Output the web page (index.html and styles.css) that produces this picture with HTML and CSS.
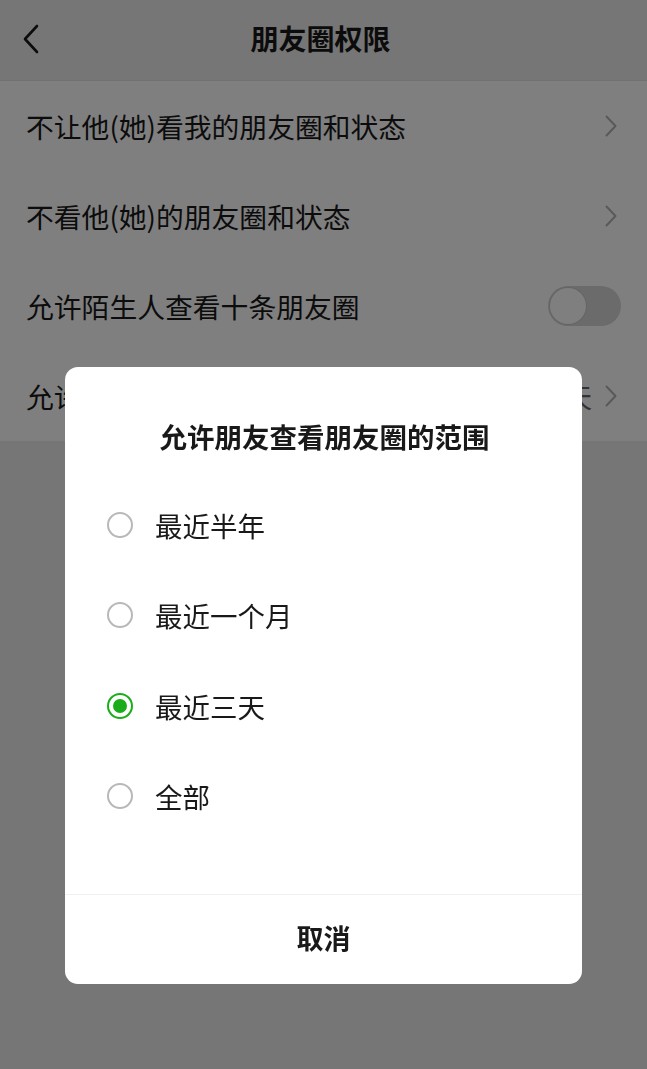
FILE: index.html
```html
<!DOCTYPE html>
<html lang="zh-CN">
<head>
<meta charset="utf-8">
<title>朋友圈权限</title>
<link rel="stylesheet" href="styles.css">
</head>
<body>
<div class="page">
  <header class="navbar">
    <div class="nav-left">
      <svg class="back" width="18" height="30" viewBox="0 0 18 30"><path d="M15 2 L3 15 L15 28" fill="none" stroke="#191919" stroke-width="2.6" stroke-linecap="round" stroke-linejoin="round"/></svg>
    </div>
    <div class="nav-title">朋友圈权限</div>
    <div class="nav-right"></div>
  </header>
  <section class="list">
    <div class="row">
      <span class="label">不让他(她)看我的朋友圈和状态</span>
      <svg class="chev" width="12" height="22" viewBox="0 0 12 22"><path d="M1.5 1.5 L10.5 11 L1.5 20.5" fill="none" stroke="#b2b2b2" stroke-width="2" stroke-linecap="round" stroke-linejoin="round"/></svg>
    </div>
    <div class="row">
      <span class="label">不看他(她)的朋友圈和状态</span>
      <svg class="chev" width="12" height="22" viewBox="0 0 12 22"><path d="M1.5 1.5 L10.5 11 L1.5 20.5" fill="none" stroke="#b2b2b2" stroke-width="2" stroke-linecap="round" stroke-linejoin="round"/></svg>
    </div>
    <div class="row">
      <span class="label">允许陌生人查看十条朋友圈</span>
      <span class="switch"><span class="knob"></span></span>
    </div>
    <div class="row">
      <span class="label">允许朋友查看朋友圈的范围</span>
      <span class="value">最近三天</span>
      <svg class="chev" width="12" height="22" viewBox="0 0 12 22"><path d="M1.5 1.5 L10.5 11 L1.5 20.5" fill="none" stroke="#b2b2b2" stroke-width="2" stroke-linecap="round" stroke-linejoin="round"/></svg>
    </div>
  </section>
</div>

<div class="mask">
  <div class="dialog">
    <div class="dialog-title">允许朋友查看朋友圈的范围</div>
    <ul class="options">
      <li class="option"><span class="radio"></span><span class="opt-text">最近半年</span></li>
      <li class="option"><span class="radio"></span><span class="opt-text">最近一个月</span></li>
      <li class="option"><span class="radio checked"></span><span class="opt-text">最近三天</span></li>
      <li class="option"><span class="radio"></span><span class="opt-text">全部</span></li>
    </ul>
    <div class="dialog-footer">取消</div>
  </div>
</div>
</body>
</html>
```
FILE: styles.css
```css
* { box-sizing: border-box; }
html, body {
  margin: 0;
  padding: 0;
}
body {
  width: 647px;
  height: 1069px;
  background: #ededed;
  font-family: "Noto Sans CJK SC", "Noto Sans", sans-serif;
  color: #191919;
  overflow: hidden;
}
.page {
  height: 1069px;
  background: #ededed;
}
.navbar {
  height: 81px;
  display: grid;
  grid-template-columns: 90px 1fr 90px;
  align-items: center;
  border-bottom: 1px solid #e2e2e2;
}
.nav-left {
  padding-left: 22px;
  display: flex;
  align-items: center;
  padding-bottom: 2px;
}
.nav-title {
  text-align: center;
  font-size: 28px;
  font-weight: 700;
  line-height: 40px;
  padding-right: 6px;
  padding-bottom: 4px;
}
.list {
  background: #ffffff;
}
.row {
  height: 90px;
  display: flex;
  align-items: center;
  padding: 0 30px 0 26px;
}
.label {
  flex: 1;
  font-size: 27.8px;
  line-height: 40px;
  white-space: nowrap;
}
.value {
  font-size: 27.8px;
  color: #666;
  margin-right: 13px;
}
.chev { display: block; }
.switch {
  width: 73px;
  height: 40px;
  border-radius: 20px;
  background: #d6d6d6;
  margin-right: -4px;
  padding: 2px;
  display: flex;
}
.knob {
  width: 36px;
  height: 36px;
  border-radius: 50%;
  background: #ffffff;
  box-shadow: 0 0 0 1px #c8c8c8;
}
.mask {
  position: fixed;
  inset: 0;
  background: rgba(0, 0, 0, 0.5);
  padding-top: 367px;
  display: flex;
  justify-content: center;
  align-items: flex-start;
}
.dialog {
  width: 517px;
  background: #ffffff;
  border-radius: 13px;
  overflow: hidden;
}
.dialog-title {
  padding-top: 49px;
  text-align: center;
  font-size: 27.5px;
  font-weight: 700;
  line-height: 40px;
  padding-left: 2px;
}
.options {
  list-style: none;
  margin: 25px 0 0;
  padding: 0 0 52px;
  border-bottom: 1px solid #f0f0f0;
}
.option {
  height: 90.3px;
  display: flex;
  align-items: center;
  padding-left: 42px;
  gap: 22px;
}
.radio {
  width: 26px;
  height: 26px;
  border-radius: 50%;
  border: 2px solid #b8b8b8;
  flex: none;
  position: relative;
  margin-top: -2px;
}
.radio.checked {
  border-color: #1aad19;
}
.radio.checked::after {
  content: "";
  position: absolute;
  left: 4px;
  top: 4px;
  width: 14px;
  height: 14px;
  border-radius: 50%;
  background: #1aad19;
}
.opt-text {
  font-size: 27.5px;
  line-height: 40px;
  margin-top: -2px;
}
.dialog-footer {
  height: 89px;
  display: flex;
  align-items: center;
  justify-content: center;
  font-size: 27px;
  font-weight: 700;
  padding-bottom: 5px;
}
```
